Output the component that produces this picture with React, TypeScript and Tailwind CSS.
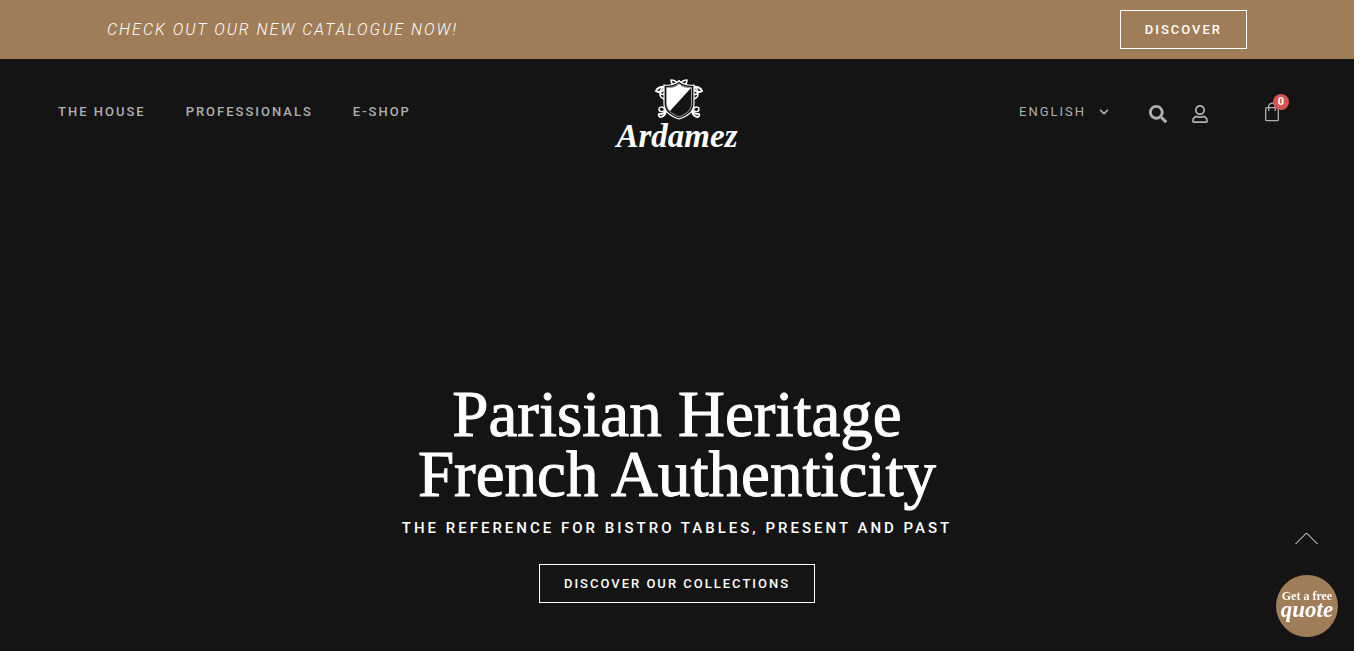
import { FaChevronDown, FaRegUser, FaSearch } from 'react-icons/fa';

const navLinks = [
  { label: 'The House', href: '#house' },
  { label: 'Professionals', href: '#professionals' },
  { label: 'E-Shop', href: '#shop' },
];

// One side of the ornament, mirrored for the other side
function Scrolls() {
  return (
    <g fill="none" stroke="#fff" strokeLinecap="round">
      <path strokeWidth="1.6" d="M16 1c0 2 1 4 2 5 2 0 4-2 6-4M16 1c3 0 5 1 8 4" />
      <path strokeWidth="2" d="M10 8C6 7 2 9 1 12c3 2 6 1 8-2" />
      <path strokeWidth="1.5" d="M8 8c-3 3-4 5-2 7 2 1 4 0 4-2M5 15c0 3 1 4 4 5" />
      <path strokeWidth="1.5" d="M10 30c-3-3-6-2-6 0 0 3 4 4 6 0" />
      <path strokeWidth="1.8" d="M12 28c-2 5-3 7-6 7-3-1-3 2-1 3 3 0 5-2 6-5" />
    </g>
  );
}

function Logo() {
  return (
    <a href="#home" className="flex flex-col items-center text-white">
      <svg width="50" height="41" viewBox="-1 0 50 41" className="ml-1" aria-hidden="true">
        <Scrolls />
        <g transform="translate(48 0) scale(-1 1)">
          <Scrolls />
        </g>
        <path
          d="M9 6c6 1 11-1 15-4 4 3 9 5 15 4v19c0 7-6 12-15 15C15 37 9 32 9 25z"
          fill="#141414"
          stroke="#fff"
          strokeWidth="1.2"
        />
        <path
          d="M11.500 8.500c5 0 9-1 12.500-4 3.500 3 7.500 4 12.500 4V25c0 6-5 10-12.500 13-7.500-3-12.500-7-12.500-13z"
          fill="#141414"
          stroke="#fff"
          strokeWidth="0.6"
        />
        <path d="M12 9c5 0 9-1 12-4 3 3 7 4 12 4L15 32c-2-2-3-4-3-7z" fill="#fff" />
      </svg>
      <span className="font-['Liberation_Serif',serif] text-[33px] font-bold italic leading-8">Ardamez</span>
    </a>
  );
}

function BagIcon() {
  return (
    <svg
      width="14"
      height="20"
      viewBox="0 0 14 20"
      fill="none"
      stroke="#afafaf"
      strokeWidth="1.3"
      className="block"
      aria-hidden="true"
    >
      <rect x="0.700" y="5.700" width="12.600" height="13" rx="1" />
      <path d="M3.700 9V4.500a3.300 3.300 0 0 1 6.600 0V9" />
    </svg>
  );
}

export default function App() {
  return (
    <div className="min-h-screen bg-white pr-3 font-['Roboto',sans-serif]">
      <div className="flex min-h-screen flex-col bg-[#141414] text-white">
        <div className="bg-[#9f7d58]">
          <div className="mx-auto flex h-[59px] max-w-[1140px] items-center justify-between">
            <p className="text-base font-light uppercase italic leading-5 tracking-[2px]">
              Check out our new catalogue now!
            </p>
            <a
              href="#catalogue"
              className="border border-white px-6 py-2 text-[13px] font-medium uppercase leading-[21px] tracking-[2px]"
            >
              Discover
            </a>
          </div>
        </div>

        <header className="grid grid-cols-[1fr_auto_1fr] items-center px-[58px] pt-5 text-[#afafaf]">
          <nav className="flex gap-10 pb-2">
            {navLinks.map((link) => (
              <a
                key={link.label}
                href={link.href}
                className="text-[13px] font-medium uppercase leading-5 tracking-[2px] hover:text-white"
              >
                {link.label}
              </a>
            ))}
          </nav>

          <Logo />

          <div className="mr-[17px] flex items-center justify-end pb-1">
            <label className="flex items-center gap-3 pb-1">
              <span className="sr-only">Language</span>
              <select className="appearance-none bg-transparent text-[13px] uppercase tracking-[2px]">
                <option>English</option>
              </select>
              <FaChevronDown size={10} aria-hidden="true" />
            </label>
            <button type="button" aria-label="Search" className="ml-10">
              <FaSearch size={18} />
            </button>
            <a href="#account" aria-label="Account" className="ml-6">
              <FaRegUser size={18} />
            </a>
            <a href="#cart" aria-label="Cart" className="relative ml-14 pb-1">
              <BagIcon />
              <span className="absolute -right-2.5 -top-2 flex size-4 items-center justify-center rounded-full bg-[#d9534f] text-[11px] font-bold leading-4 text-white">
                0
              </span>
            </a>
          </div>
        </header>

        <main className="flex flex-1 flex-col items-center justify-end pb-12 text-center">
          <h1 className="font-['Liberation_Serif',serif] text-[65px] leading-[60px] [-webkit-text-stroke:1px_white]">
            Parisian Heritage
            <br />
            French Authenticity
          </h1>
          <h2 className="mt-3 text-[15px] font-medium uppercase leading-6 tracking-[3px]">
            The reference for bistro tables, present and past
          </h2>
          <a
            href="#collections"
            className="mt-6 border border-white px-6 py-2 text-[13px] font-medium uppercase leading-[21px] tracking-[2px]"
          >
            Discover our collections
          </a>
        </main>
      </div>

      <a href="#top" aria-label="Back to top" className="fixed bottom-[106px] right-12">
        <svg
          width="23"
          height="14"
          viewBox="0 0 23 14"
          fill="none"
          stroke="#fff"
          className="block"
          aria-hidden="true"
        >
          <path d="M0.500 13l11-11 11 11" />
        </svg>
      </a>
      <a
        href="#quote"
        className="fixed bottom-3.5 right-7 flex size-[62px] flex-col items-center justify-center rounded-full bg-[#9f7d58] pb-1 font-['Liberation_Serif',serif] font-bold text-white"
      >
        <span className="text-xs leading-3">Get a free</span>
        <span className="text-[23px] italic leading-4">quote</span>
      </a>
    </div>
  );
}
